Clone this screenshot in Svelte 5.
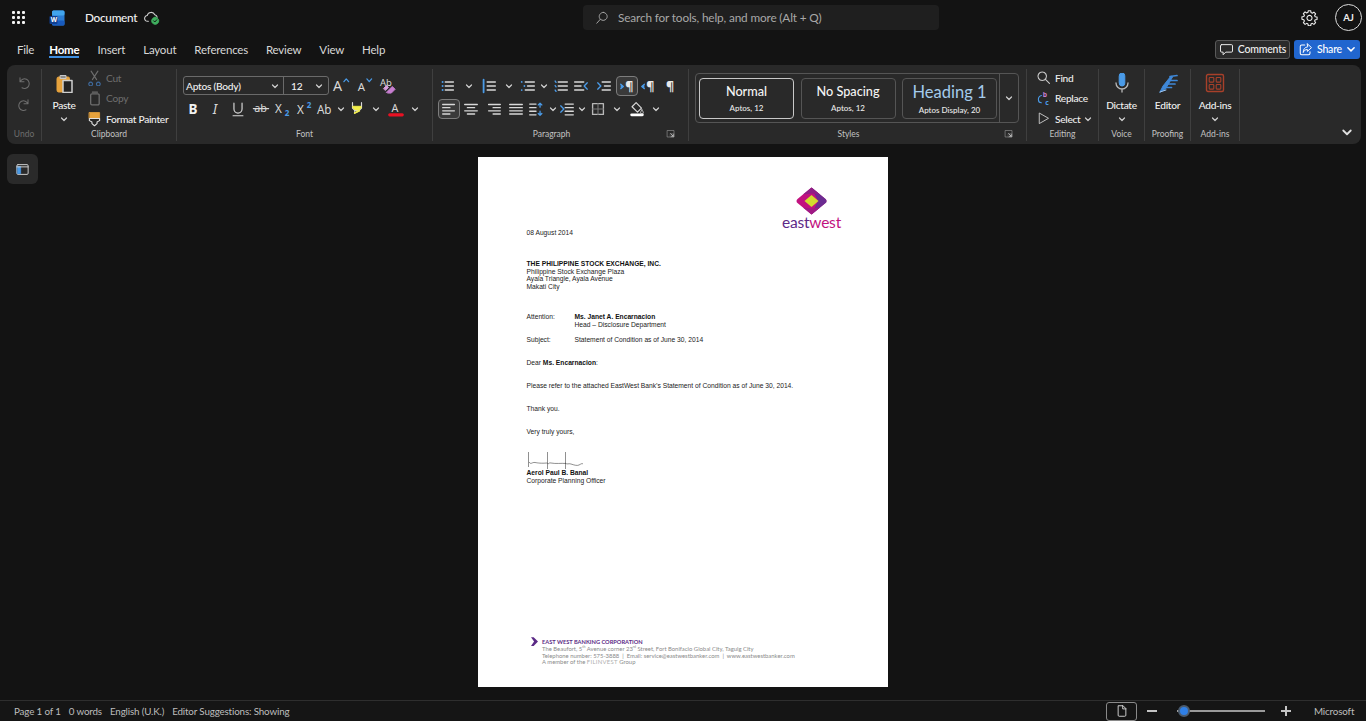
<script>
  const G = '#d8d8d8', B = '#4a9be8', D = '#6e6e6e', DB = '#3f6a9c';
  const P = (d, s = G, w = 1.3, f = 'none') => ({ d, s, w, f });
  const T = (t, x, y, size, o = {}) => ({ t, x, y, size, fill: o.fill || G, weight: o.weight || 500, style: o.style || 'normal' });
  const lines3 = (x1, x2) => `M${x1} 5.5H${x2}M${x1} 10H${x2}M${x1} 14.5H${x2}`;
  const icons = {
    undo: [P('M5 3.5v5h5M5 8.5a6 6 0 1 1 2.5 7.5', D)],
    redo: [P('M15 3.5v5h-5M15 8.5a6 6 0 1 0-2.5 7.5', D)],
    paste: [
      P('M3 5.5a1.5 1.5 0 0 1 1.5-1.5H14a1.5 1.5 0 0 1 1.5 1.5V19H4.5A1.5 1.5 0 0 1 3 17.5Z', '#e6a23c', 1, '#e6a23c'),
      P('M6.5 2.5h5.5v3H6.5Z', '#c9c9c9', 1, '#8c8c8c'),
      P('M9 7.5h9v12H9Z', '#cfcfcf', 1.5, '#232323')
    ],
    cut: [P('M6 2.5l6.5 10M14 2.5l-6.5 10', D), P('M5.5 15.5a2.2 2.2 0 1 0 .01 0ZM14.5 15.5a2.2 2.2 0 1 0 .01 0Z', DB)],
    copy: [P('M7 4.5h7a1.5 1.5 0 0 1 1.5 1.5v10A1.5 1.5 0 0 1 14 17.5H7A1.5 1.5 0 0 1 5.5 16V6A1.5 1.5 0 0 1 7 4.5Z', D, 1.5), P('M7.5 2.5h6', D)],
    painter: [
      P('M4 3h12v7H4Z', '#e6a23c', 1, '#e6a23c'),
      P('M4 10h12v2.5l-3 1.5v2l-3 2.5-3-2.5v-2l-3-1.5Z', '#e0e0e0', 1.3, '#262626')
    ],
    grow: [T('A', 1, 16, 15, { weight: 400 }), P('M12.5 6l2.5-3 2.5 3', B, 1.3)],
    shrink: [T('A', 3, 16, 12, { weight: 400 }), P('M12.5 3l2.5 3 2.5-3', B, 1.3)],
    clear: [T('Ab', 2, 11, 10, { weight: 400 }), P('M9 17l6-6 3 3-4 4h-3Z', '#c77ed0', 1, '#c77ed0'), P('M6 13l3-3 2 2-3 3Z', '#d9a0dd', 1, '#d9a0dd')],
    b: [T('B', 4, 15.5, 15, { weight: 700, fill: '#f2f2f2' })],
    i: [T('I', 6.5, 15.5, 15, { weight: 400, style: 'italic' })],
    u: [P('M5.5 3.5v6.5a4.5 4.5 0 0 0 9 0V3.5M4.5 17.5h11')],
    strike: [T('ab', 2.5, 13, 12, { weight: 400 }), P('M1.5 9.5h17')],
    sub: [T('X', 1, 14, 13, { weight: 400 }), T('2', 12, 18, 9, { fill: B, weight: 700 })],
    sup: [T('X', 1, 16, 13, { weight: 400 }), T('2', 12, 9, 9, { fill: B, weight: 700 })],
    case: [T('Ab', 1, 15, 13, { weight: 400 })],
    high: [P('M5 3v6l2.5 2.5h5L15 9V3', G, 1.3), P('M5.5 7h9v2l-2 2h-5l-2-2Z', '#f2ee4a', 1, '#f2ee4a'), P('M7.5 11.5v3l5-2.5v-.5', G, 1.3), P('M7.5 14.5l5-2.5', '#f2ee4a', 2)],
    color: [T('A', 5, 13, 12, { weight: 400 }), P('M3 16.5h14', '#e81123', 3.4)],
    bullets: [P('M4 5.5h.01M4 10h.01M4 14.5h.01', B, 2.2), P(lines3(7, 16), G, 1.6)],
    numbers: [P('M4 3v14', B, 2), P(lines3(8, 17), G, 1.6)],
    multi: [P('M3 5.5h.01M6 10h.01M3 14.5h.01', B, 2), P('M7 5.5h10M9.5 10h7.5M7 14.5h10', G, 1.6)],
    check: [P('M3.5 4.5l1 1.5M3.5 9.5l1 1.5M3.5 14.5l1 1.5', B, 1.5), P(lines3(7, 17), G, 1.6)],
    outdent: [P('M3 5.5h10M3 10h7M3 14.5h10', G, 1.6), P('M17 6.5L13.5 10 17 13.5', B, 1.5)],
    indent: [P('M3 6.5L6.5 10 3 13.5', B, 1.5), P('M8 5.5h9M10.5 10h6.5M8 14.5h9', G, 1.6)],
    ltr: [T('¶', 8, 15.5, 14, { weight: 700, fill: '#e8e8e8' }), P('M3 8l3 2.5-3 2.5', B, 1.4, B)],
    rtl: [T('¶', 8, 15.5, 14, { weight: 700, fill: '#e8e8e8' }), P('M6 8l-3 2.5 3 2.5', B, 1.4, B)],
    para: [T('¶', 5.5, 15.5, 14, { weight: 700, fill: '#e8e8e8' })],
    left: [P('M3 5h13M3 8.5h8M3 12h13M3 15.5h8', G, 1.5)],
    center: [P('M3 5h14M6 8.5h8M3 12h14M6 15.5h8', G, 1.5)],
    right: [P('M4 5h13M9 8.5h8M4 12h13M9 15.5h8', G, 1.5)],
    justify: [P('M3 5h14M3 8.5h14M3 12h14M3 15.5h14', G, 1.5)],
    spacing: [P('M3 4.5h7M3 8.5h7M3 12.5h7M3 16.5h7', G, 1.5), P('M14.5 3.5v4.5M12.5 5.5l2-2 2 2M14.5 17v-4.5M12.5 15l2 2 2-2', B, 1.4)],
    linein: [P('M3 6.5L6.5 10 3 13.5', B, 1.5), P('M8 4.5h9M8 8.5h9M8 12.5h9M8 16.5h9', G, 1.5)],
    border: [P('M4 4h12v12H4Z', '#b8b8b8', 1.5), P('M10 4v12M4 10h12', '#777', 1.2)],
    shade: [P('M9 3l6 6-4.5 4.5-6-6Z', G, 1.3), P('M4 16.5h12', '#fff', 3), P('M15.5 11s1.5 2 1.5 3a1.5 1.5 0 0 1-3 0c0-1 1.5-3 1.5-3Z', G, 1)],
    launcher: [P('M3 3h13v13H3Z', '#9a9a9a', 1.2), P('M9 9h7v7H9Z', '#777', 1), P('M9.5 9.5l5 5M14.5 11v3.5H11', '#e0e0e0', 1.4)],
    find: [P('M8.5 3.5a5 5 0 1 0 .01 0ZM12 12l5 5', '#c8c8c8', 1.3)],
    replace: [T('b', 9, 8.5, 8, { fill: '#c77ed0', weight: 700 }), T('c', 12, 17.5, 8, { fill: B, weight: 700 }), P('M7.5 6.5a5 5 0 0 0-3.5 5c0 2 1.5 3.5 3.5 3.5', B, 1.3)],
    select: [P('M5 4v12l10.5-6Z', '#c8c8c8', 1.1)],
    mic: [P('M7.2 2.8a2.8 2.8 0 0 1 5.6 0v7.4a2.8 2.8 0 0 1-5.6 0Z', B, 1, B), P('M4 10a6 6 0 0 0 12 0M10 16v3', '#b8b8b8', 1.3)],
    editor: [
      P('M2 19l3-6L13 3l1.5 1-7 12Z', '#3f88d8', 1, '#3f88d8'),
      P('M12 3.5l7-1M11 7.5h8M9.5 11h7.5M7.5 14.5h6', '#3f88d8', 1.7),
      P('M2 19l6-2', '#9ec4ec', 1)
    ],
    addins: [
      P('M3 1.5h14A1.5 1.5 0 0 1 18.5 3v14a1.5 1.5 0 0 1-1.5 1.5H3A1.5 1.5 0 0 1 1.5 17V3A1.5 1.5 0 0 1 3 1.5Z', '#a8402a', 1.4),
      P('M5 4.5h3a.8.8 0 0 1 .8.8v3a.8.8 0 0 1-.8.8H5a.8.8 0 0 1-.8-.8v-3a.8.8 0 0 1 .8-.8ZM12 4.5h3a.8.8 0 0 1 .8.8v3a.8.8 0 0 1-.8.8h-3a.8.8 0 0 1-.8-.8v-3a.8.8 0 0 1 .8-.8ZM5 11.5h3a.8.8 0 0 1 .8.8v3a.8.8 0 0 1-.8.8H5a.8.8 0 0 1-.8-.8v-3a.8.8 0 0 1 .8-.8ZM12 11.5h3a.8.8 0 0 1 .8.8v3a.8.8 0 0 1-.8.8h-3a.8.8 0 0 1-.8-.8v-3a.8.8 0 0 1 .8-.8Z', '#a8402a', 1.1)
    ],
    search: [P('M11.5 3a5 5 0 1 1-.01 0ZM8 11.5L3.5 16.5', '#a8a8a8', 1.2)],
    gear: [
      P('M8.6 2h2.8l.4 2.2 1.5.7 1.9-1.2 2 2-1.2 1.9.7 1.5 2.2.4v2.8l-2.2.4-.7 1.5 1.2 1.9-2 2-1.9-1.2-1.5.7-.4 2.2H8.6l-.4-2.2-1.5-.7-1.9 1.2-2-2 1.2-1.9-.7-1.5L1.1 12V9.2l2.2-.4.7-1.5L2.8 5.4l2-2 1.9 1.2 1.5-.7Z', '#f0f0f0', 1.3),
      P('M10 7.5a3 3 0 1 0 .01 0Z', '#f0f0f0', 1.3)
    ],
    comment: [P('M3.5 3.5h13a1.5 1.5 0 0 1 1.5 1.5v7a1.5 1.5 0 0 1-1.5 1.5H9l-3.5 3.5v-3.5h-2A1.5 1.5 0 0 1 2 12V5a1.5 1.5 0 0 1 1.5-1.5Z', '#ececec', 1.3)],
    share: [P('M9 4H5a2 2 0 0 0-2 2v9a2 2 0 0 0 2 2h9a2 2 0 0 0 2-2v-2', '#fff', 1.4), P('M12.5 2.5L18 7.5l-5.5 5V10C9.5 10 8 11.5 7 14c0-4.5 2-7 5.5-7.5Z', '#fff', 1.3)],
    cloud: [
      P('M5.5 14H4.5a3.5 3.5 0 0 1-.5-7 5 5 0 0 1 9.5-1 4 4 0 0 1 3 3', '#d0d0d0', 1.3),
      P('M14 9a4.5 4.5 0 1 0 .01 0Z', '#3fae5e', 1, '#3fae5e'),
      P('M12 13.5l1.5 1.5 2.5-2.8', '#101010', 1.2)
    ],
    side: [P('M4 3.5h12A1.5 1.5 0 0 1 17.5 5v10a1.5 1.5 0 0 1-1.5 1.5H4A1.5 1.5 0 0 1 2.5 15V5A1.5 1.5 0 0 1 4 3.5Z', '#d0d0d0', 1.3), P('M3.5 6h4v9.5h-4Z', B, 1, B), P('M2.5 6.5h15', '#d0d0d0', 1.3)],
    pageview: [P('M5 2.5h6.5L15.5 6.5V16a1.5 1.5 0 0 1-1.5 1.5H6A1.5 1.5 0 0 1 4.5 16V3Z', '#dcdcdc', 1.3), P('M11 2.5V7h4.5', '#dcdcdc', 1.3)]
  };
  const C = (w) => ({ w, chev: true });
  const I = (w, i) => ({ w, i });
  const fontRow = [I(22,'b'),I(22,'i'),I(22.5,'u'),I(22.5,'strike'),I(21.5,'sub'),I(22,'sup'),I(18.5,'case'),C(14.5),I(17.5,'high'),C(20),I(19.5,'color'),C(19.5)];
  const paraRow1 = [I(20.5,'bullets'),C(20),I(20,'numbers'),C(20.5),I(17.5,'multi'),C(14.5),I(19,'check'),I(22.5,'outdent'),I(23,'indent'),{w:22,i:'ltr',box:true},I(21.5,'rtl'),I(22,'para')];
  const paraRow2 = [{w:22,i:'left',box:true},I(22.5,'center'),I(22.5,'right'),I(22,'justify'),I(18,'spacing'),C(15),I(14.5,'linein'),C(14.5),I(17.5,'border'),C(20),I(20,'shade'),C(19.5)];
  const styles = [
    { n: 'Normal', s: 'Aptos, 12', cls: 'on' },
    { n: 'No Spacing', s: 'Aptos, 12', cls: '' },
    { n: 'Heading 1', s: 'Aptos Display, 20', cls: 'h1' }
  ];
  const tabs = ['File', 'Home', 'Insert', 'Layout', 'References', 'Review', 'View', 'Help'];
</script>

{#snippet ic(name, size = 20)}
  <svg class="ic" width={size} height={size} viewBox="0 0 20 20" fill="none" aria-hidden="true">
    {#each icons[name] as p}
      {#if p.t}
        <text x={p.x} y={p.y} font-size={p.size} fill={p.fill} font-weight={p.weight} font-style={p.style} font-family="Noto Sans, sans-serif">{p.t}</text>
      {:else}
        <path d={p.d} stroke={p.s} stroke-width={p.w} fill={p.f} stroke-linecap="round" stroke-linejoin="round" />
      {/if}
    {/each}
  </svg>
{/snippet}

{#snippet chev(color = '#d0d0d0', size = 8)}
  <svg class="ic" width={size} height={size} viewBox="0 0 8 8" fill="none" aria-hidden="true"><path d="M1.5 3l2.5 2.5L6.5 3" stroke={color} stroke-width="1.2" stroke-linecap="round" stroke-linejoin="round" /></svg>
{/snippet}

{#snippet row(items)}
  <div class="irow">
    {#each items as it}
      <span class="cell" class:box={it.box} style:width="{it.w}px">
        {#if it.chev}{@render chev()}{:else}{@render ic(it.i, 18)}{/if}
      </span>
    {/each}
  </div>
{/snippet}

{#snippet label(text, launcher = false, dim = false)}
  <div class="glabel" class:dim>
    <span class="gtext">{text}</span>
    {#if launcher}<span class="launch">{@render ic('launcher', 10)}</span>{/if}
  </div>
{/snippet}

<div class="app">
  <header class="top">
    <div class="waffle" aria-hidden="true">
      {#each Array(9) as _}<i></i>{/each}
    </div>
    <svg class="wlogo" width="16" height="16" viewBox="0 0 16 16" aria-hidden="true">
      <rect x="3" y="0.5" width="12.5" height="15" rx="1.5" fill="#2b7cd3" />
      <rect x="3" y="0.5" width="12.5" height="5" rx="1.5" fill="#41a5ee" />
      <rect x="3" y="10.5" width="12.5" height="5" rx="1.5" fill="#185abd" />
      <rect x="0.5" y="6" width="8" height="8" rx="1" fill="#103f91" />
      <text x="1.8" y="12.3" font-size="6.5" font-weight="700" fill="#fff" font-family="Noto Sans, sans-serif">W</text>
    </svg>
    <span class="doc">Document</span>
    {@render ic('cloud', 16)}
    <div class="search">
      {@render ic('search', 16)}
      <span>Search for tools, help, and more (Alt + Q)</span>
    </div>
    <div class="gear">{@render ic('gear', 17)}</div>
    <div class="avatar">AJ</div>
  </header>

  <nav class="tabs">
    {#each tabs as t}
      <span class="tab" class:active={t === 'Home'}>{t}</span>
    {/each}
    <span class="grow"></span>
    <button class="comments">{@render ic('comment', 15)}Comments</button>
    <button class="share">{@render ic('share', 15)}Share{@render chev('#fff', 10)}</button>
  </nav>

  <section class="ribbon">
    <div class="group g-undo">
      <div class="gbody undo">
        {@render ic('undo', 16)}
        {@render ic('redo', 16)}
      </div>
      {@render label('Undo', false, true)}
    </div>

    <div class="group g-clip">
      <div class="gbody clip">
        <div class="big paste">
          {@render ic('paste', 20)}
          <span>Paste</span>
          {@render chev()}
        </div>
        <div class="small">
          <div class="sitem off">{@render ic('cut', 17)}<span>Cut</span></div>
          <div class="sitem off">{@render ic('copy', 17)}<span>Copy</span></div>
          <div class="sitem">{@render ic('painter', 17)}<span>Format Painter</span></div>
        </div>
      </div>
      {@render label('Clipboard')}
    </div>

    <div class="group g-font">
      <div class="gbody rows">
        <div class="irow">
          <div class="combo">
            <span class="fname">Aptos (Body){@render chev()}</span>
            <span class="fsize">12{@render chev()}</span>
          </div>
          <span class="cell fa first">{@render ic('grow', 19)}</span>
          <span class="cell fa">{@render ic('shrink', 19)}</span>
          <span class="cell fa">{@render ic('clear', 19)}</span>
        </div>
        {@render row(fontRow)}
      </div>
      {@render label('Font')}
    </div>

    <div class="group g-para">
      <div class="gbody rows">
        {@render row(paraRow1)}
        {@render row(paraRow2)}
      </div>
      {@render label('Paragraph', true)}
    </div>

    <div class="group g-styles">
      <div class="gbody">
        <div class="gallery">
          <div class="cards">
            {#each styles as st}
              <div class="card {st.cls}">
                <span class="sname">{st.n}</span>
                <span class="ssub">{st.s}</span>
              </div>
            {/each}
          </div>
          <div class="more">{@render chev()}</div>
        </div>
      </div>
      {@render label('Styles', true)}
    </div>

    <div class="group g-edit">
      <div class="gbody small">
        <div class="sitem">{@render ic('find', 17)}<span>Find</span></div>
        <div class="sitem">{@render ic('replace', 17)}<span>Replace</span></div>
        <div class="sitem">{@render ic('select', 17)}<span>Select</span>{@render chev()}</div>
      </div>
      {@render label('Editing')}
    </div>

    <div class="group g-voice">
      <div class="gbody big">{@render ic('mic', 20)}<span>Dictate</span>{@render chev()}</div>
      {@render label('Voice')}
    </div>
    <div class="group g-proof">
      <div class="gbody big">{@render ic('editor', 20)}<span>Editor</span></div>
      {@render label('Proofing')}
    </div>
    <div class="group g-add">
      <div class="gbody big">{@render ic('addins', 20)}<span>Add-ins</span>{@render chev()}</div>
      {@render label('Add-ins')}
    </div>
    <div class="collapse">{@render chev('#e0e0e0', 12)}</div>
  </section>

  <main class="main">
    <div class="rail"><div class="sidebtn">{@render ic('side', 15)}</div></div>
    <article class="page">
      <div class="letterhead">
        <div class="logo">
          <svg width="31" height="28" viewBox="0 0 31 28" aria-hidden="true">
            <path d="M15.5 0.5L29.5 12a2.5 2.5 0 0 1 0 4L15.5 27.5 1.5 16a2.5 2.5 0 0 1 0-4Z" fill="#c2127f" />
            <path d="M15.5 0.5L29.5 12a2.5 2.5 0 0 1 0 4L15.5 27.5 22 14Z" fill="#6b2c91" />
            <path d="M15.5 0.5L7 7.5 15.5 6.5 24 7.5Z" fill="#8f1f86" />
            <path d="M15.5 27.5L7 20.5 15.5 21.5 24 20.5Z" fill="#a01a84" />
            <path d="M15.5 8L22.5 14 15.5 20 8.5 14Z" fill="#d2dc2e" />
          </svg>
          <span class="wordmark"><b>east</b><em>west</em></span>
        </div>
      </div>
      <p class="date">08 August 2014</p>
      <p class="addr"><strong>THE PHILIPPINE STOCK EXCHANGE, INC.</strong><br />Philippine Stock Exchange Plaza<br />Ayala Triangle, Ayala Avenue<br />Makati City</p>
      <div class="kv attn"><span>Attention:</span><span><strong>Ms. Janet A. Encarnacion</strong><br />Head – Disclosure Department</span></div>
      <div class="kv subj"><span>Subject:</span><span>Statement of Condition as of June 30, 2014</span></div>
      <p class="gap">Dear <strong>Ms. Encarnacion</strong>:</p>
      <p class="gap">Please refer to the attached EastWest Bank’s Statement of Condition as of June 30, 2014.</p>
      <p class="gap">Thank you.</p>
      <p class="gap">Very truly yours,</p>
      <svg class="sig" width="60" height="18" viewBox="0 0 60 18" fill="none" aria-hidden="true">
        <path d="M1.5 1v15M2 11c2 3 3 0 6 .5 3 .5 6 1 12 .5M20.5 1v17M20 12c2 2 2-1 4 0 5 1 10 0 15 .5M38.5 1v17M38 12c3 2 3 0 6 1 3 1 6 2 8 1 2-1 3-2 4-1" stroke="#444" stroke-width=".6" />
      </svg>
      <p class="signer"><strong>Aerol Paul B. Banal</strong><br />Corporate Planning Officer</p>
      <footer class="pfoot">
        <svg width="7" height="9" viewBox="0 0 8 10" aria-hidden="true"><path d="M0 0h3l5 5-5 5H0l3.5-5Z" fill="#5b2a86" /></svg>
        <div class="ftext">
          <div class="corp">EAST WEST BANKING CORPORATION</div>
          <div>The Beaufort, 5<sup>th</sup> Avenue corner 23<sup>rd</sup> Street, Fort Bonifacio Global City, Taguig City</div>
          <div>Telephone number: 575-3888 &nbsp;|&nbsp; Email: service@eastwestbanker.com &nbsp;|&nbsp; www.eastwestbanker.com</div>
          <div>A member of the <span class="fil">FILINVEST</span> Group</div>
        </div>
      </footer>
    </article>
    <div></div>
  </main>

  <footer class="status">
    <span>Page 1 of 1</span>
    <span>0 words</span>
    <span>English (U.K.)</span>
    <span>Editor Suggestions: Showing</span>
    <span class="grow"></span>
    <div class="pv">{@render ic('pageview', 14)}</div>
    <span class="zm minus"></span>
    <div class="slider"><i class="thumb"></i></div>
    <span class="zm plus"></span>
    <span class="ms">Microsoft</span>
  </footer>
</div>

<style>
  :global(body) { margin: 0; background: #131313; }
  .app {
    width: 1366px; height: 721px; overflow: hidden; display: flex; flex-direction: column;
    background: #131313; color: #e6e6e6;
    font-family: Lato, "Noto Sans", "Liberation Sans", sans-serif; font-size: 11px;
  }
  .ic { display: block; flex: none; }
  .grow { flex: 1; }

  .top { height: 35px; display: flex; align-items: center; padding-left: 12px; flex: none; }
  .waffle { width: 13px; display: grid; grid-template-columns: repeat(3, 3px); gap: 2px; }
  .waffle i { width: 3px; height: 3px; background: #f2f2f2; border-radius: 1px; }
  .wlogo { margin-left: 24px; }
  .doc { margin-left: 20px; font-size: 11.8px; letter-spacing: -.3px; font-weight: 500; color: #f0f0f0; margin-right: 6px; width: 53px; white-space: nowrap; }
  .search {
    margin-left: 423px; width: 356px; height: 25px; box-sizing: border-box; background: #1f1f1f; border-radius: 4px;
    display: flex; align-items: center; gap: 8px; padding-left: 11px; color: #a8a8a8; font-size: 11.8px; letter-spacing: -.15px;
  }
  .gear { margin-left: 362px; }
  .avatar {
    margin-left: 17px; width: 25px; height: 25px; border: 1.5px solid #dcdcdc; border-radius: 50%;
    display: flex; align-items: center; justify-content: center; font-size: 9.5px; font-weight: 700; color: #f0f0f0;
  }

  .tabs { height: 30px; flex: none; display: flex; align-items: center; gap: 18px; padding: 0 6px 2px 17px; box-sizing: border-box; font-size: 11.5px; letter-spacing: -.2px; color: #d8d8d8; }
  .tab { position: relative; }
  .tab:first-child { margin-right: -3px; }
  .tab.active { font-weight: 700; color: #fff; }
  .tab.active::after { content: ""; position: absolute; left: 0; right: 1px; bottom: -2px; height: 2px; background: #3f8fe0; }
  .comments, .share {
    height: 19px; padding: 0; display: flex; align-items: center; justify-content: center; border-radius: 3px;
    font: 500 10.5px Lato, sans-serif; letter-spacing: -.2px; color: #f0f0f0; box-sizing: border-box; gap: 4px;
  }
  .comments { width: 75px; background: #2a2a2a; border: 1px solid #5a5a5a; margin-right: -14px; }
  .share { width: 66px; background: #2166cf; border: none; color: #fff; }

  .ribbon { margin: 0 5px 0 7px; height: 79px; flex: none; box-sizing: border-box; padding: 4px 0 3px; display: flex; background: #292929; border-radius: 8px; }
  .group { display: flex; flex-direction: column; border-right: 1px solid #3f3f3f; box-sizing: border-box; flex: none; }
  .gbody { height: 58px; flex: none; box-sizing: border-box; }
  .glabel { height: 13px; display: flex; align-items: center; font-size: 8.5px; color: #c2c2c2; }
  .glabel.dim { color: #6e6e6e; }
  .gtext { flex: 1; text-align: center; }
  .launch { width: 18px; flex: none; margin-left: -4px; margin-right: 4px; }

  .g-undo { width: 35px; }
  .undo { display: flex; flex-direction: column; align-items: center; gap: 6px; padding-top: 6px; }
  .g-clip { width: 135px; }
  .clip { display: flex; }
  .big { display: flex; flex-direction: column; align-items: center; padding-top: 4px; font-size: 10.2px; letter-spacing: -.3px; font-weight: 500; color: #f0f0f0; }
  .big > span { line-height: 14px; margin-top: 5px; margin-bottom: 3px; white-space: nowrap; }
  .paste { width: 44px; }
  .small { display: flex; flex-direction: column; margin-top: -1.5px; }
  .sitem { height: 20.5px; flex: none; display: flex; align-items: center; gap: 3px; font-weight: 500; font-size: 10.2px; letter-spacing: -.3px; color: #efefef; white-space: nowrap; }
  .sitem.off { color: #6e6e6e; font-weight: 400; }
  .g-font { width: 256px; }
  .rows { padding-top: 7px; display: flex; flex-direction: column; gap: 3.5px; }
  .g-font .rows { padding-left: 6px; }
  .g-para .rows { padding-left: 5px; }
  .irow { display: flex; height: 19.5px; align-items: center; }
  .cell { display: flex; align-items: center; justify-content: center; height: 19.5px; box-sizing: border-box; }
  .cell.box { border: 1.5px solid #7d7d7d; border-radius: 4px; background: #3a3a3a; }
  .cell.fa { width: 23px; }
  .cell.fa.first { margin-left: 1px; }
  .combo { width: 146px; height: 19px; box-sizing: border-box; display: flex; border: 1px solid #6a6a6a; border-radius: 3px; font-size: 10.2px; letter-spacing: -.25px; font-weight: 500; color: #f0f0f0; }
  .fname { width: 100px; box-sizing: border-box; padding: 0 4px 0 2px; display: flex; align-items: center; justify-content: space-between; border-right: 1px solid #6a6a6a; }
  .fsize { flex: 1; padding: 0 5px 0 7px; display: flex; align-items: center; justify-content: space-between; }

  .g-para { width: 256px; }
  .g-styles { width: 338px; }
  .g-styles .gbody { padding: 4px 0 0 6px; }
  .gallery { width: 324px; height: 50px; box-sizing: border-box; border: 1px solid #555; border-radius: 4px; display: flex; }
  .cards { display: flex; gap: 6.5px; padding: 4px 0 0 3px; width: 304px; box-sizing: border-box; border-right: 1px solid #555; }
  .more { flex: 1; display: flex; align-items: center; justify-content: center; }
  .card { width: 95px; height: 41px; box-sizing: border-box; border: 1px solid #555; border-radius: 4px; display: flex; flex-direction: column; align-items: center; padding-top: 4px; }
  .card.on { border: 1.5px solid #c8c8c8; }
  .sname { font-size: 12.7px; font-weight: 500; line-height: 17px; color: #f5f5f5; }
  .ssub { font-size: 8px; font-weight: 500; line-height: 12px; margin-top: 2px; color: #eaeaea; }
  .card.h1 { padding-top: 3px; }
  .card.h1 .sname { font-size: 16.5px; font-weight: 400; line-height: 20px; color: #a4cbec; }
  .card.h1 .ssub { margin-top: 2px; }

  .g-edit { width: 72px; }
  .g-edit .gbody { height: 59.5px; padding-left: 8px; }
  .g-voice { width: 46px; }
  .g-proof { width: 46px; }
  .g-add { width: 49px; }
  .collapse { flex: 1; display: flex; justify-content: flex-end; align-items: flex-end; padding: 0 8px 3px 0; }

  .main { flex: 1; display: grid; grid-template-columns: 1fr 410px 1fr; padding-top: 13px; box-sizing: border-box; min-height: 0; }
  .sidebtn { margin: -3px 0 0 7px; width: 31px; height: 30px; background: #2a2a2a; border-radius: 6px; display: flex; align-items: center; justify-content: center; }
  .page {
    width: 410px; height: 530px; background: #fff; color: #222; box-sizing: border-box; padding: 30px 47px 21.5px 48.5px;
    display: flex; flex-direction: column; font-family: "Liberation Sans", Arial, sans-serif; font-size: 6.7px; line-height: 7.8px;
  }
  .page p { margin: 0; }
  .page strong { color: #111; }
  .letterhead { height: 42px; flex: none; display: flex; justify-content: flex-end; }
  .logo { display: flex; flex-direction: column; align-items: center; height: 42px; }
  .logo svg { flex: none; }
  .wordmark { font: 400 15.5px/14px Lato, sans-serif; letter-spacing: -.2px; }
  .wordmark b { font-weight: 400; color: #5e2a88; }
  .wordmark em { font-style: normal; font-weight: 400; color: #c2127f; }
  .page .addr { margin-top: 23px; }
  .kv { display: grid; grid-template-columns: 48px 1fr; }
  .attn { margin-top: 22px; }
  .subj { margin-top: 7px; }
  .page .gap { margin-top: 15.3px; }
  .sig { margin-top: 15px; margin-bottom: 0; flex: none; }
  .signer { line-height: 8px; }
  .pfoot { margin-top: auto; display: flex; gap: 4px; padding-left: 4.5px; }
  .pfoot svg { flex: none; margin-top: -1px; }
  .ftext { font: 400 5.9px/6.5px Lato, "Noto Sans", sans-serif; color: #8a8a8a; }
  .ftext sup { font-size: 3.5px; line-height: 0; }
  .corp { color: #5b2a86; font-weight: 700; line-height: 8px; font-size: 5.7px; }
  .fil { letter-spacing: .3px; color: #b0b0b0; }

  .status { height: 21px; flex: none; box-sizing: border-box; border-top: 1px solid #2e2e2e; background: #151515; display: flex; align-items: center; padding-left: 14px; gap: 8px; font-size: 9.8px; letter-spacing: -.15px; color: #bdbdbd; }
  .pv { width: 31px; height: 19px; box-sizing: border-box; border: 1px solid #8a8a8a; border-radius: 3px; display: flex; align-items: center; justify-content: center; margin-right: 2px; }
  .zm { width: 10px; height: 1.5px; background: #c4c4c4; position: relative; flex: none; }
  .zm.plus::after { content: ""; position: absolute; left: 4.25px; top: -4.25px; width: 1.5px; height: 10px; background: #c4c4c4; }
  .slider { width: 88px; height: 2px; background: #9a9a9a; position: relative; margin: 0 8px 0 12px; flex: none; }
  .thumb { position: absolute; left: 1px; top: -5px; width: 8px; height: 8px; background: #2f7fe6; border: 2px solid #4b5b6e; border-radius: 50%; }
  .ms { margin: 0 13px 0 15px; width: 39px; white-space: nowrap; }
</style>
